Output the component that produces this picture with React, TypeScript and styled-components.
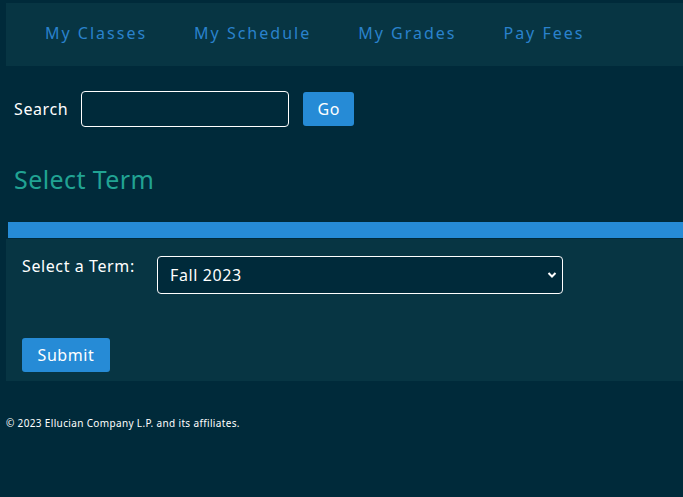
import React from "react";
import styled, { createGlobalStyle } from "styled-components";

const Global = createGlobalStyle`
  html, body { margin: 0; padding: 0; background: #002a3a; }
  body { font-family: "Noto Sans", "Open Sans", sans-serif; color: #ffffff; letter-spacing: 0.6px; }
  * { box-sizing: border-box; }
`;

const Page = styled.div`
  padding: 3px 0 0 6px;
  min-height: 497px;
`;

const Nav = styled.nav`
  background: #073543;
  height: 63px;
  display: flex;
  align-items: center;
  padding-left: 15px;
`;

const NavLink = styled.a`
  color: #2a82cc;
  font-size: 16px;
  letter-spacing: 2px;
  padding: 0 23px 0 24px;
  text-decoration: none;
  margin-top: -4px;
`;

const SearchRow = styled.div`
  display: flex;
  align-items: center;
  padding: 25px 0 0 8px;
  height: 61px;
`;

const Label = styled.label`
  font-size: 16px;
  color: #ffffff;
`;

const TextInput = styled.input`
  width: 208px;
  height: 36px;
  margin-left: 13px;
  background: #002a3a;
  border: 1px solid #ffffff;
  border-radius: 4px;
  color: #fff;
`;

const Button = styled.button<{ $w: number }>`
  width: ${(p) => p.$w}px;
  height: 34px;
  background: #268bd6;
  border: none;
  border-radius: 3px;
  color: #ffffff;
  font-family: inherit;
  font-size: 16px;
  letter-spacing: 0.6px;
  padding: 0;
`;

const GoButton = styled(Button)`
  margin-left: 14px;
`;

const Heading = styled.h2`
  margin: 0;
  padding: 35px 0 0 8px;
  height: 95px;
  font-size: 25px;
  line-height: 34px;
  font-weight: 400;
  letter-spacing: 0.4px;
  color: #21a393;
`;

const Bar = styled.div`
  margin-left: 2px;
  height: 16px;
  background: #268bd6;
`;

const Panel = styled.div`
  margin-top: 1px;
  background: #073543;
  height: 142px;
  padding: 17px 16px 0 16px;
  display: flex;
  flex-direction: column;
`;

const FieldRow = styled.div`
  display: flex;
  align-items: flex-start;
`;

const FieldLabel = styled.label`
  width: 135px;
  font-size: 16px;
  line-height: 18px;
  padding-top: 1px;
`;

const SelectWrap = styled.div`
  position: relative;
  width: 406px;
  height: 38px;
`;

const Select = styled.select`
  appearance: none;
  width: 100%;
  height: 100%;
  background: #002a3a;
  border: 1px solid #ffffff;
  border-radius: 4px;
  color: #ffffff;
  font-family: inherit;
  font-size: 16px;
  letter-spacing: 0.6px;
  padding: 0 12px;
`;

const Chevron = styled.svg`
  position: absolute;
  right: 6px;
  top: 15px;
  pointer-events: none;
`;

const SubmitRow = styled.div`
  margin-top: 44px;
`;

const Footer = styled.footer`
  padding-top: 35px;
  font-size: 10px;
  letter-spacing: 0.35px;
  color: #ffffff;
`;

export default function App() {
  return (
    <>
      <Global />
      <Page>
        <Nav>
          <NavLink href="#">My Classes</NavLink>
          <NavLink href="#">My Schedule</NavLink>
          <NavLink href="#">My Grades</NavLink>
          <NavLink href="#">Pay Fees</NavLink>
        </Nav>
        <SearchRow>
          <Label>Search</Label>
          <TextInput type="text" />
          <GoButton $w={51}>Go</GoButton>
        </SearchRow>
        <Heading>Select Term</Heading>
        <Bar />
        <Panel>
          <FieldRow>
            <FieldLabel>Select a Term:</FieldLabel>
            <SelectWrap>
              <Select defaultValue="fall2023">
                <option value="fall2023">Fall 2023</option>
                <option value="spring2024">Spring 2024</option>
              </Select>
              <Chevron width="10" height="8" viewBox="0 0 10 8">
                <path d="M1.5 2 L5 5.5 L8.5 2" fill="none" stroke="#ffffff" strokeWidth="2" />
              </Chevron>
            </SelectWrap>
          </FieldRow>
          <SubmitRow>
            <Button $w={88}>Submit</Button>
          </SubmitRow>
        </Panel>
        <Footer>© 2023 Ellucian Company L.P. and its affiliates.</Footer>
      </Page>
    </>
  );
}
